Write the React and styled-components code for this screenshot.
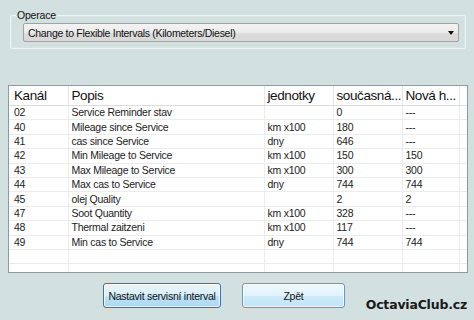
import React from "react";
import styled, { createGlobalStyle } from "styled-components";

const Global = createGlobalStyle`
  html, body { margin: 0; padding: 0; }
  body { background: #d2e1e0; font-family: "Liberation Sans", Arial, sans-serif; }
`;

const Window = styled.div`
  width: 474px;
  height: 320px;
  box-sizing: border-box;
  background: #d2e1e0;
  padding-top: 8px;
  display: flex;
  flex-direction: column;
  overflow: hidden;
`;

const Group = styled.fieldset`
  margin: 0 0 0 10px;
  width: 456px;
  box-sizing: border-box;
  border: 1px solid #eef5f4;
  box-shadow: inset 0 0 0 1px #d8e4e3;
  border-radius: 2px;
  padding: 1px 6px 6px 5px;
  min-width: 0;
`;

const Legend = styled.legend`
  padding: 0 1px;
  font-size: 10.5px;
  line-height: 14px;
  letter-spacing: -0.2px;
  color: #111;
`;

const Select = styled.div`
  margin-left: 7px;
  height: 19px;
  box-sizing: border-box;
  border: 1px solid #9ea3a3;
  border-radius: 2px;
  background: linear-gradient(#f3f3f3 0%, #ebebeb 50%, #dddddd 51%, #d8d8d8 100%);
  display: flex;
  align-items: center;
  padding: 0 4px 0 4px;
  font-size: 10.5px;
  letter-spacing: -0.3px;
  color: #111;
`;

const SelectText = styled.span`
  flex: 1;
  white-space: nowrap;
`;

const Arrow = styled.span`
  width: 0;
  height: 0;
  border-left: 3.5px solid transparent;
  border-right: 3.5px solid transparent;
  border-top: 4px solid #111;
  margin-top: 1px;
`;

const ListBox = styled.div`
  margin: 36px 0 0 8px;
  width: 460px;
  height: 188px;
  box-sizing: border-box;
  border: 1px solid #8e9aa0;
  background: #fff;
  overflow: hidden;
`;

const Table = styled.table`
  border-collapse: collapse;
  table-layout: fixed;
  width: 458px;
`;

const Head = styled.th`
  height: 19px;
  padding: 0 0 0 ${(p) => (p.$first ? 5 : 3)}px;
  text-align: left;
  font-weight: normal;
  font-size: 13.5px;
  letter-spacing: -0.4px;
  color: #111;
  border-right: 1px solid #e6e6e6;
  border-bottom: 1px solid #dcdcdc;
  white-space: nowrap;
  overflow: hidden;
`;

const Cell = styled.td`
  height: 13.4px;
  padding: 0 0 0 ${(p) => (p.$first ? 5 : 3)}px;
  font-size: 10.5px;
  line-height: 13px;
  letter-spacing: -0.25px;
  color: #222;
  border-right: 1px solid #ececec;
  border-bottom: 1px solid #ececec;
  white-space: nowrap;
  overflow: hidden;
`;

const ButtonRow = styled.div`
  display: flex;
  align-items: flex-start;
  gap: 21px;
  padding-left: 103px;
  margin-top: 10px;
`;

const Button = styled.button`
  width: ${(p) => p.$w}px;
  height: 25px;
  box-sizing: border-box;
  border: 1px solid ${(p) => (p.$focus ? "#3a76a6" : "#6f96bb")};
  border-radius: 3px;
  background: ${(p) =>
    p.$focus
      ? "linear-gradient(#e8f5fc 0%, #d9effb 50%, #bfe3f7 51%, #a9d8f2 100%)"
      : "linear-gradient(#eef8fd 0%, #e2f3fc 50%, #cdebfa 51%, #c1e4f7 100%)"};
  box-shadow: inset 0 0 0 1px rgba(255, 255, 255, 0.7);
  font-family: "Liberation Sans", Arial, sans-serif;
  font-size: 10.5px;
  letter-spacing: -0.25px;
  color: #111;
  padding: 0;
  margin: 0;
`;

const Watermark = styled.div`
  margin-left: auto;
  margin-right: 7px;
  margin-top: 15px;
  font-family: "DejaVu Sans", Verdana, sans-serif;
  font-weight: bold;
  font-size: 12.5px;
  letter-spacing: -0.2px;
  color: #1a1a1a;
  line-height: 14px;
`;

const rows = [
  ["02", "Service Reminder stav", "", "0", "---"],
  ["40", "Mileage since Service", "km x100", "180", "---"],
  ["41", "cas since Service", "dny", "646", "---"],
  ["42", "Min Mileage to Service", "km x100", "150", "150"],
  ["43", "Max Mileage to Service", "km x100", "300", "300"],
  ["44", "Max cas to Service", "dny", "744", "744"],
  ["45", "olej Quality", "", "2", "2"],
  ["47", "Soot Quantity", "km x100", "328", "---"],
  ["48", "Thermal zaitzeni", "km x100", "117", "---"],
  ["49", "Min cas to Service", "dny", "744", "744"],
  ["", "", "", "", ""],
  ["", "", "", "", ""],
  ["", "", "", "", ""],
];

const widths = [59, 196, 69, 69, 57, 8];
const heads = ["Kanál", "Popis", "jednotky", "současná...", "Nová h...", ""];

export default function App() {
  return (
    <Window>
      <Global />
      <Group>
        <Legend>Operace</Legend>
        <Select>
          <SelectText>Change to Flexible Intervals (Kilometers/Diesel)</SelectText>
          <Arrow />
        </Select>
      </Group>
      <ListBox>
        <Table>
          <colgroup>
            {widths.map((w, i) => (
              <col key={i} style={{ width: w }} />
            ))}
          </colgroup>
          <thead>
            <tr>
              {heads.map((h, i) => (
                <Head key={i} $first={i === 0}>
                  {h}
                </Head>
              ))}
            </tr>
          </thead>
          <tbody>
            {rows.map((r, i) => (
              <tr key={i}>
                {r.map((c, j) => (
                  <Cell key={j} $first={j === 0}>
                    {c}
                  </Cell>
                ))}
                <Cell />
              </tr>
            ))}
          </tbody>
        </Table>
      </ListBox>
      <ButtonRow>
        <Button $w={123} $focus>
          Nastavit servisní interval
        </Button>
        <Button $w={107}>Zpět</Button>
        <Watermark>OctaviaClub.cz</Watermark>
      </ButtonRow>
    </Window>
  );
}
